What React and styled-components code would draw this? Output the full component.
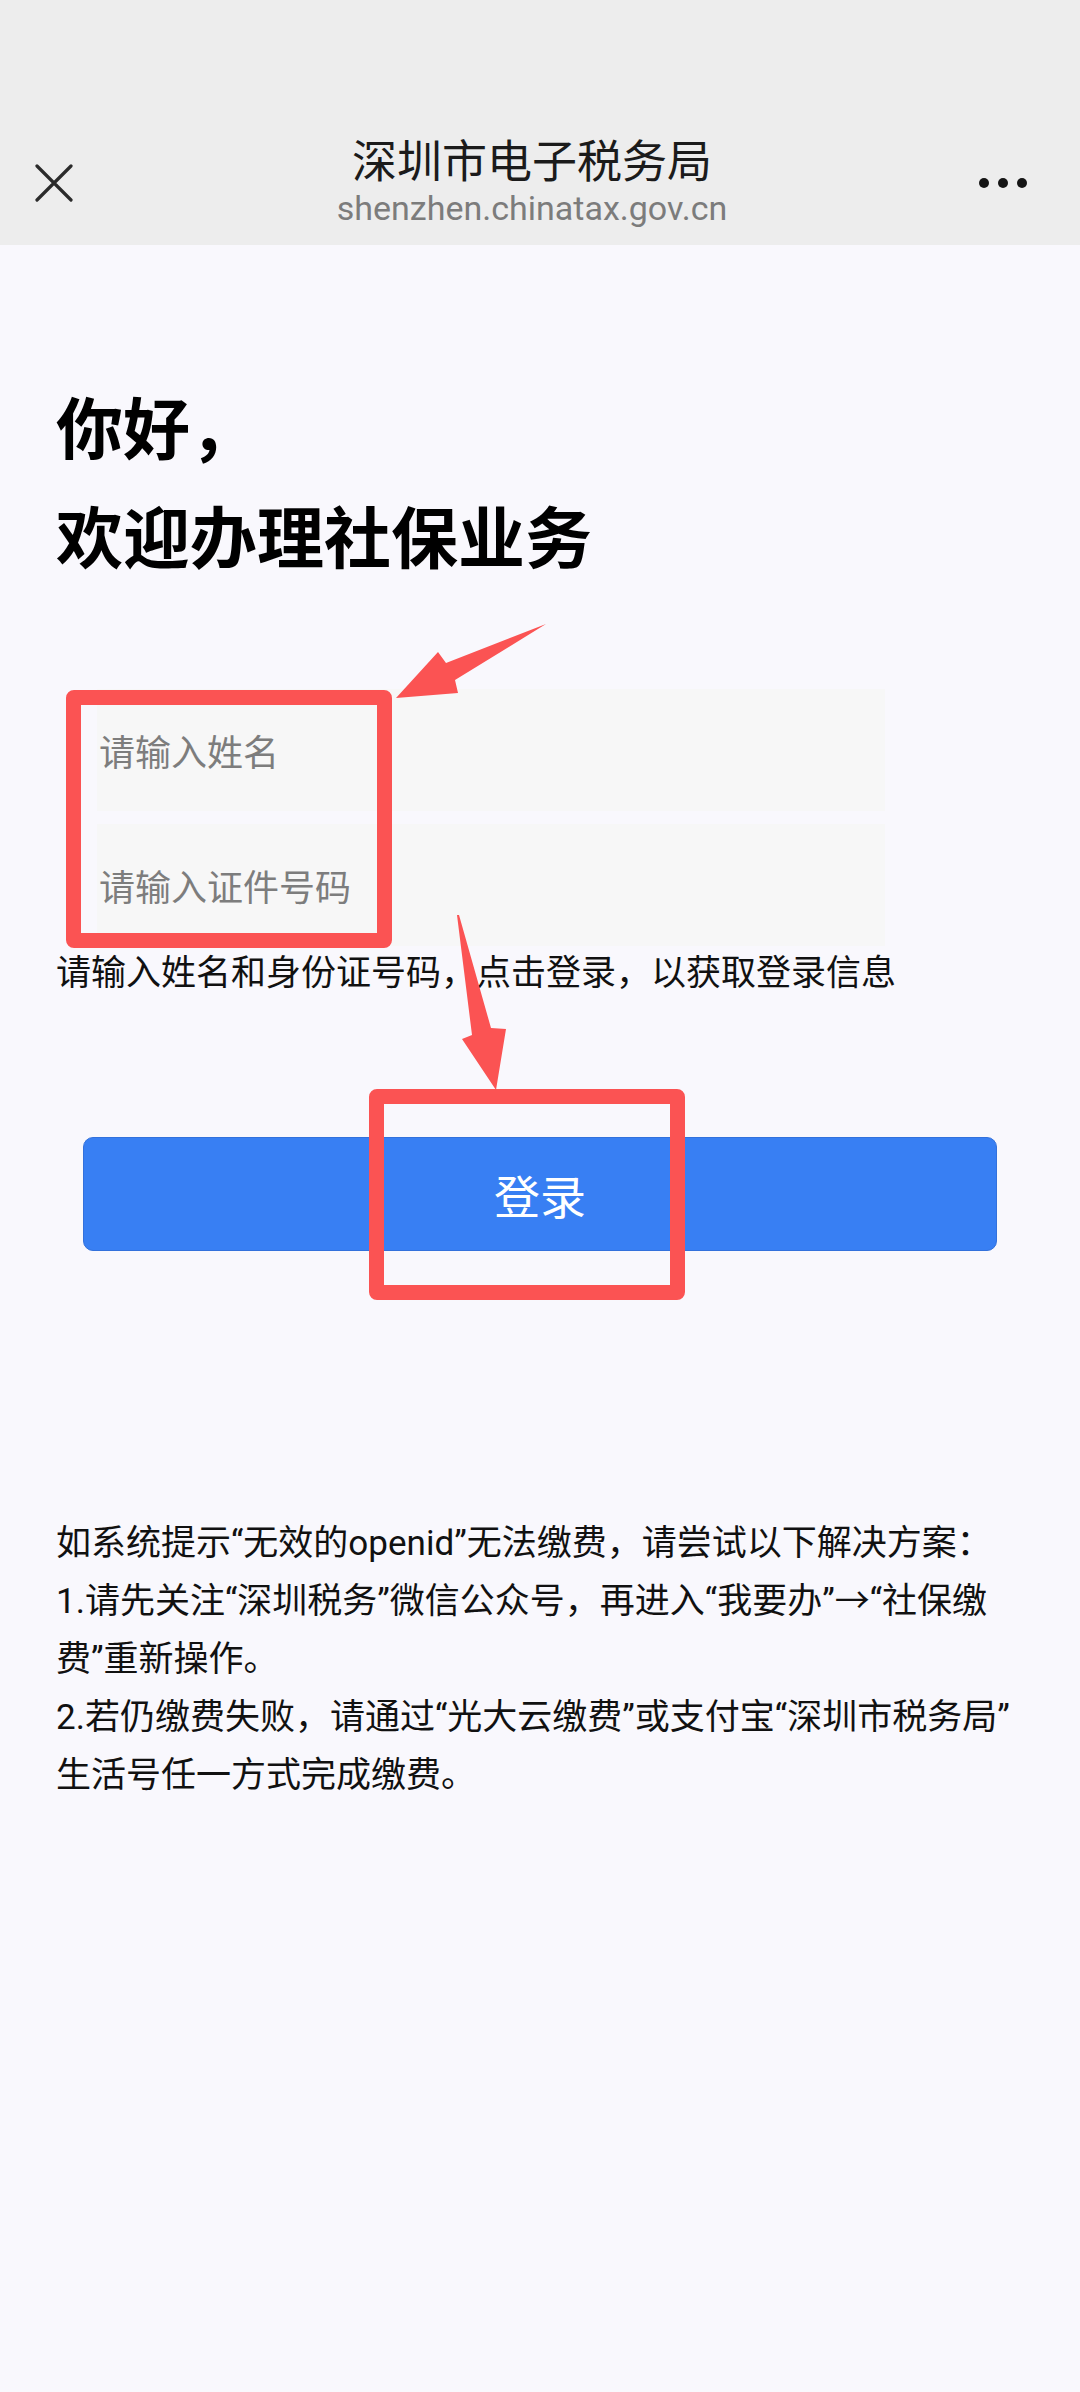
import styled, { createGlobalStyle } from 'styled-components';

const GlobalStyle = createGlobalStyle`
  * {
    box-sizing: border-box;
  }
  body {
    margin: 0;
    background: #f9f8fd;
    font-family: "Noto Sans CJK SC", "Noto Sans", sans-serif;
  }
`;

function CloseIcon() {
  return (
    <svg width='38' height='38' viewBox='0 0 38 38'>
      <path
        d='M2 2 L36 36 M36 2 L2 36'
        stroke='#2b2b2b'
        strokeWidth='3.2'
        strokeLinecap='round'
      />
    </svg>
  );
}

function MoreIcon() {
  return (
    <svg width='50' height='12' viewBox='0 0 50 12'>
      <circle cx='5' cy='6' r='5' fill='#151515' />
      <circle cx='24' cy='6' r='5' fill='#151515' />
      <circle cx='43' cy='6' r='5' fill='#151515' />
    </svg>
  );
}

function App() {
  return (
    <Page>
      <GlobalStyle />
      <Header>
        <IconButton>
          <CloseIcon />
        </IconButton>
        <TitleBlock>
          <Title>深圳市电子税务局</Title>
          <Url>shenzhen.chinatax.gov.cn</Url>
        </TitleBlock>
        <IconButton $right>
          <MoreIcon />
        </IconButton>
      </Header>

      <Content>
        <Greeting>
          你好，
          <br />
          欢迎办理社保业务
        </Greeting>

        <Form>
          <Input type='text' placeholder='请输入姓名' />
          <Input type='text' placeholder='请输入证件号码' />
        </Form>
        <Hint>请输入姓名和身份证号码，点击登录，以获取登录信息</Hint>

        <LoginButton type='button'>登录</LoginButton>

        <Notes>
          <p>如系统提示“无效的openid”无法缴费，请尝试以下解决方案：</p>
          <p>1.请先关注“深圳税务”微信公众号，再进入“我要办”→“社保缴费”重新操作。</p>
          <p>
            2.若仍缴费失败，请通过“光大云缴费”或支付宝“深圳市税务局”<wbr />
            生活号任一方式完成缴费。
          </p>
        </Notes>
      </Content>

      <Mark $left={66} $top={690} $w={326} $h={258} />
      <Mark $left={369} $top={1089} $w={316} $h={211} />

      <Arrow $left={390} $top={618} width='162' height='86' viewBox='0 0 162 86'>
        <polygon points='6,80 48,34 56,45 156,6 65,62 68,75' fill='#fb5353' />
      </Arrow>
      <Arrow $left={450} $top={910} width='62' height='185' viewBox='0 0 62 185'>
        <polygon points='7,5 22,125 12,129 46,180 56,119 41,118 9,5' fill='#fb5353' />
      </Arrow>
    </Page>
  );
}

const Page = styled.div`
  position: relative;
  min-height: 2392px;
  background: #f9f8fd;
`;

const Header = styled.header`
  height: 245px;
  padding: 114px 51px 0 35px;
  background: #ededed;
  display: flex;
  align-items: center;
`;

const IconButton = styled.div`
  width: 60px;
  margin-top: 6px;
  display: flex;
  justify-content: ${({ $right }) => ($right ? 'flex-end' : 'flex-start')};
  align-items: center;
`;

const TitleBlock = styled.div`
  flex: 1;
  display: flex;
  flex-direction: column;
  align-items: center;
`;

const Title = styled.div`
  font-size: 45px;
  line-height: 56px;
  color: #1b1b1b;
`;

const Url = styled.div`
  font-family: Roboto, "Noto Sans", sans-serif;
  font-size: 34px;
  line-height: 42px;
  color: #7c7c7c;
`;

const Content = styled.main`
  padding: 0 56px;
`;

const Greeting = styled.h1`
  margin: 125px 0 0;
  font-size: 67px;
  line-height: 109px;
  font-weight: 700;
  color: #000;
`;

const Form = styled.div`
  margin: 101px 0 0 41px;
  width: 788px;
  display: flex;
  flex-direction: column;
  gap: 13px;
`;

const Input = styled.input`
  height: 122px;
  padding: 0 2px;
  border: none;
  outline: none;
  background: #f7f7f7;
  font-family: "Noto Sans CJK SC", sans-serif;
  font-size: 36px;
  color: #222;

  &::placeholder {
    color: #7d7d7d;
  }
`;

const Hint = styled.p`
  margin: 0;
  font-size: 35px;
  line-height: 48px;
  color: #111;
`;

const LoginButton = styled.button`
  display: block;
  width: calc(100% - 54px);
  height: 114px;
  margin: 143px 27px 0;
  border: 1px solid #3371dc;
  border-radius: 10px;
  background: #387ff3;
  color: #fff;
  font-family: "Noto Sans CJK SC", sans-serif;
  font-size: 46px;
`;

const Notes = styled.div`
  margin: 264px -4px 0 0;
  font-family: Roboto, "Noto Sans CJK SC", sans-serif;
  font-size: 35px;
  line-height: 58px;
  color: #111;

  p {
    margin: 0;
  }
`;

const Mark = styled.div`
  position: absolute;
  left: ${({ $left }) => $left}px;
  top: ${({ $top }) => $top}px;
  width: ${({ $w }) => $w}px;
  height: ${({ $h }) => $h}px;
  border: 15px solid #fb5353;
  border-radius: 8px;
`;

const Arrow = styled.svg`
  position: absolute;
  left: ${({ $left }) => $left}px;
  top: ${({ $top }) => $top}px;
`;

export default App;
